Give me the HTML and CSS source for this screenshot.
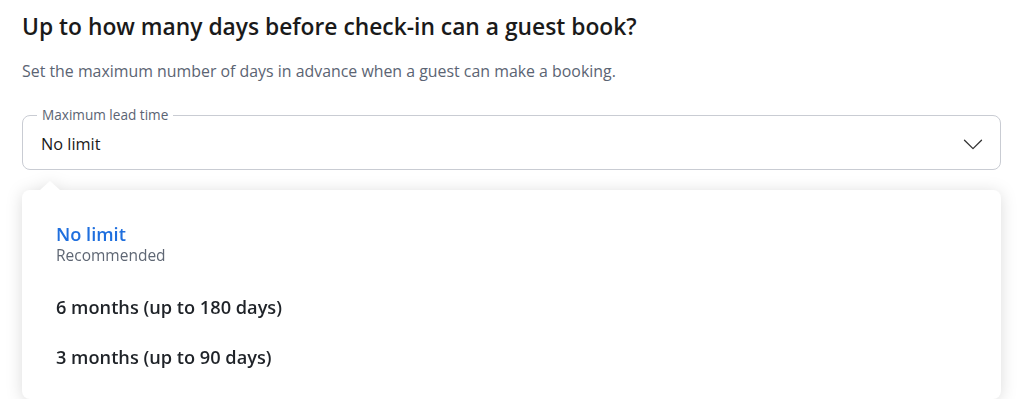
FILE: index.html
```html
<!DOCTYPE html>
<html lang="en">
<head>
<meta charset="utf-8">
<title>Maximum lead time</title>
<link rel="stylesheet" href="styles.css">
</head>
<body>
<main class="page">
  <h1 class="title">Up to how many days before check-in can a guest book?</h1>
  <p class="subtitle">Set the maximum number of days in advance when a guest can make a booking.</p>
  <fieldset class="select">
    <legend class="select-label">Maximum lead time</legend>
    <div class="select-row">
      <span class="select-value">No limit</span>
      <svg class="chevron" width="20" height="11" viewBox="0 0 20 11" aria-hidden="true">
        <path d="M1.5 1.2 L10 9.6 L18.5 1.2" fill="none" stroke="#333333" stroke-width="1.3" stroke-linecap="round" stroke-linejoin="round"/>
      </svg>
    </div>
  </fieldset>
  <div class="dropdown">
    <div class="notch"></div>
    <ul class="menu">
      <li class="option option-selected">
        <span class="option-title">No limit</span>
        <span class="option-hint">Recommended</span>
      </li>
      <li class="option"><span class="option-title">6 months (up to 180 days)</span></li>
      <li class="option"><span class="option-title">3 months (up to 90 days)</span></li>
    </ul>
  </div>
</main>
</body>
</html>
```
FILE: styles.css
```css
* { box-sizing: border-box; }
html, body { margin: 0; padding: 0; background: #ffffff; }
body {
  font-family: "Open Sans", "Noto Sans", "Liberation Sans", sans-serif;
  color: #1a1a1a;
}
.page {
  padding: 11px 28px 0 22px;
}
.title {
  margin: 0;
  font-size: 22.8px;
  line-height: 32px;
  font-weight: 600;
  color: #1a1a1a;
}
.subtitle {
  margin: 17px 0 0;
  font-size: 15.9px;
  line-height: 22px;
  color: #5b6473;
}
.select {
  margin: 25px 0 0;
  padding: 0 14px 4px 14px;
  border: 1px solid #c9ccd3;
  border-radius: 8px;
  min-width: 0;
}
.select-label {
  padding: 0 5px;
  font-size: 13.6px;
  line-height: 16px;
  color: #5b6473;
}
.select-row {
  display: flex;
  align-items: center;
  justify-content: space-between;
  height: 42px;
  padding: 0 3px 0 4px;
}
.select-value {
  font-size: 16.3px;
  color: #1a1a1a;
}
.chevron { display: block; }
.dropdown {
  margin-top: 11px;
  display: flex;
  flex-direction: column;
  filter: drop-shadow(0 2px 8px rgba(0, 0, 0, 0.14));
}
.notch {
  width: 20px;
  height: 9px;
  margin-left: 18px;
  background: #ffffff;
  clip-path: polygon(50% 0, 100% 100%, 0 100%);
}
.menu {
  list-style: none;
  margin: 0;
  padding: 32px 34px 30px 34px;
  background: #ffffff;
  border-radius: 8px;
  display: flex;
  flex-direction: column;
  gap: 26px;
}
.option {
  display: flex;
  flex-direction: column;
}
.option-selected { margin-bottom: 4px; }
.option-title {
  font-size: 18.2px;
  line-height: 24px;
  font-weight: 600;
  color: #1f2328;
}
.option-selected .option-title { color: #1f6fde; }
.option-hint {
  margin-top: -1px;
  font-size: 15.5px;
  line-height: 20px;
  color: #5f6774;
}
```
